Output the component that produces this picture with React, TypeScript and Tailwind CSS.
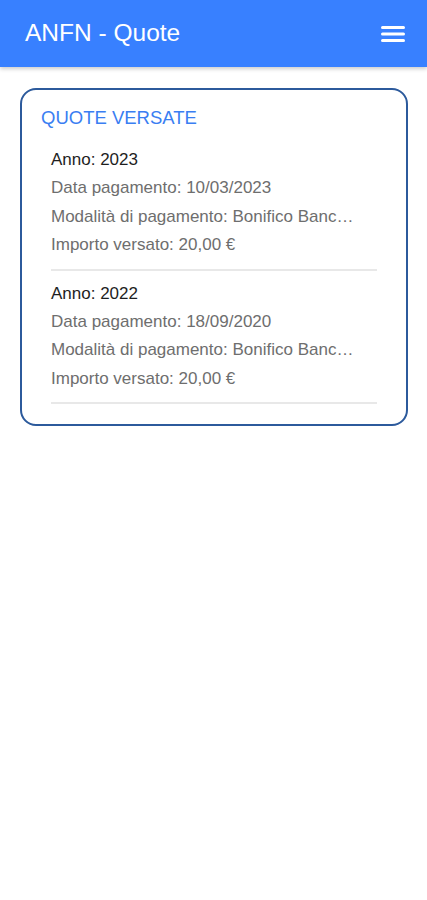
const quote = [
  { anno: "2023", data: "10/03/2023", modalita: "Bonifico Bancario", importo: "20,00 €" },
  { anno: "2022", data: "18/09/2020", modalita: "Bonifico Bancario", importo: "20,00 €" },
];

function MenuIcon() {
  return (
    <svg width="26" height="20" viewBox="0 0 26 20" fill="none" stroke="white" strokeWidth="3" strokeLinecap="round">
      <line x1="2.5" y1="3.5" x2="23.5" y2="3.5" />
      <line x1="2.5" y1="10" x2="23.5" y2="10" />
      <line x1="2.5" y1="16.5" x2="23.5" y2="16.5" />
    </svg>
  );
}

export default function App() {
  return (
    <div className="min-h-[900px] bg-white font-['Liberation_Sans',Arial,sans-serif]">
      {/* Toolbar */}
      <header className="h-[67px] bg-[#3880ff] flex items-center justify-between pl-[25px] pr-[21px] shadow-[0_2px_4px_rgba(0,0,0,0.2)]">
        <h1 className="text-white text-[24.5px] leading-none">ANFN - Quote</h1>
        <MenuIcon />
      </header>

      {/* Card */}
      <div className="mt-[21px] ml-[20px] mr-[19px] border-2 border-[#2c5a9c] rounded-[16px] pt-[16px] pb-[20px] pl-[19px] pr-[29px]">
        <h2 className="text-[#3a7ef2] text-[18.5px] leading-[24px] uppercase">Quote versate</h2>
        <div className="mt-[16px] pl-[10px]">
          {quote.map((q, i) => (
            <div key={q.anno} className={i > 0 ? "pt-[9px]" : ""}>
              <div className="pr-[20px] text-[17px] leading-[28.4px]">
                <p className="text-[#1e1e1e]">Anno: {q.anno}</p>
                <p className="text-[#6e6e6e]">Data pagamento: {q.data}</p>
                <p className="text-[#6e6e6e] truncate">Modalità di pagamento: {q.modalita}</p>
                <p className="text-[#6e6e6e]">Importo versato: {q.importo}</p>
              </div>
              <div className="mt-[9px] h-[2px] bg-[#e8e8e8]" />
            </div>
          ))}
        </div>
      </div>
    </div>
  );
}
